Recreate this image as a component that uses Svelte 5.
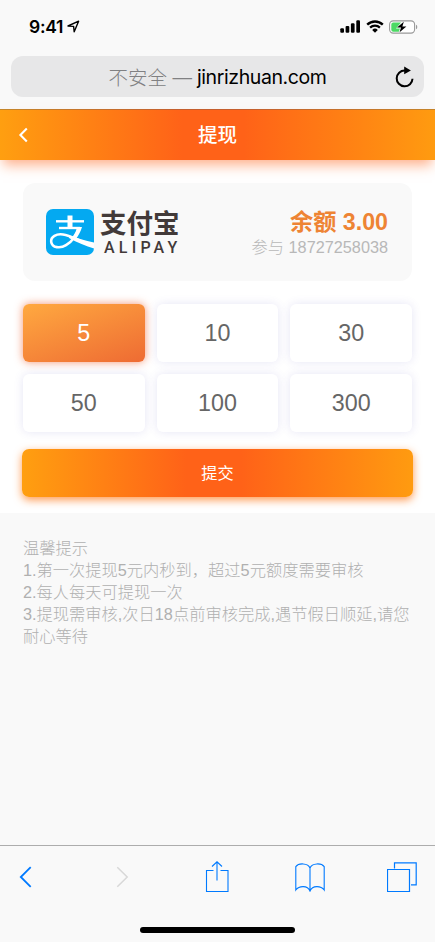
<script lang="ts">
	let amounts = [5, 10, 30, 50, 100, 300];
	let selected = $state(5);

	let tips = [
		'1.第一次提现5元内秒到，超过5元额度需要审核',
		'2.每人每天可提现一次',
		'3.提现需审核,次日18点前审核完成,遇节假日顺延,请您耐心等待',
	];
</script>

<div class="screen">
	<div class="status-bar">
		<div class="clock">
			<span>9:41</span>
			<svg width="13" height="13" viewBox="0 0 13 13">
				<path d="M1 6 L11.6 1.2 L7.2 11.8 L6.6 6.4 Z" fill="none" stroke="#000" stroke-width="1.4" stroke-linejoin="round" />
			</svg>
		</div>
		<div class="indicators">
			<svg width="21" height="13" viewBox="0 0 21 13">
				<rect x="0.3" y="8.2" width="3.7" height="4.6" rx="1.1" />
				<rect x="5.6" y="6" width="3.7" height="6.8" rx="1.1" />
				<rect x="10.9" y="3.3" width="3.7" height="9.5" rx="1.1" />
				<rect x="16.3" y="0.3" width="3.7" height="12.5" rx="1.1" />
			</svg>
			<svg width="18" height="13" viewBox="0 0 18 13">
				<path d="M1.2 4.6 A11.2 11.2 0 0 1 16.8 4.6" fill="none" stroke="#000" stroke-width="2.4" />
				<path d="M4.1 7.6 A7.1 7.1 0 0 1 13.9 7.6" fill="none" stroke="#000" stroke-width="2.2" />
				<path d="M9 12.8 L6.2 9.9 A4 4 0 0 1 11.8 9.9 Z" />
			</svg>
			<svg width="29" height="14" viewBox="0 0 29 14">
				<rect x="0.6" y="0.9" width="25" height="12.2" rx="3.6" fill="#fff" stroke="#999" stroke-width="1.1" />
				<path d="M4.3 2.4 H12 L7 8.4 H11 L9.8 11.7 H4.3 Q2.3 11.7 2.3 9.7 V4.4 Q2.3 2.4 4.3 2.4 Z" fill="#4cd964" />
				<path d="M14.8 1.8 L8 7.6 H12 L10.6 12.3 L17.4 6.4 H13.4 Z" fill="#000" />
				<path d="M27 4.8 Q28.3 5.3 28.3 7 Q28.3 8.7 27 9.2 Z" fill="#999" />
			</svg>
		</div>
	</div>

	<div class="address-bar">
		<div class="address">
			<span class="insecure">不安全 —</span>
			<span class="domain">jinrizhuan.com</span>
			<svg class="reload" width="20" height="22" viewBox="0 0 20 22">
				<path d="M11 4.5 H9.8 A7.9 7.9 0 1 0 17.5 12.7" fill="none" stroke="#000" stroke-width="2" />
				<path d="M9.2 0.6 L15.9 4.4 L9.2 8.2 Z" />
			</svg>
		</div>
	</div>

	<header>
		<button class="back" aria-label="返回">
			<svg width="10" height="16" viewBox="0 0 10 16">
				<path d="M8.8 1.6 L2.4 8 L8.8 14.4" fill="none" stroke="#fff" stroke-width="2.1" />
			</svg>
		</button>
		<h1>提现</h1>
	</header>

	<main>
		<section class="account">
			<div class="alipay">
				<svg width="48" height="46" viewBox="0 0 48 46">
					<rect width="48" height="46" rx="7" fill="#04a9f1" />
					<g fill="none" stroke="#fff">
						<path d="M24 6.5 V19.5" stroke-width="5" />
						<path d="M10 12.3 H38" stroke-width="2.4" />
						<path d="M13 19 H34" stroke-width="2.4" />
						<path d="M32.8 18.5 C31 26 26 32.5 20 36.2 C14.5 39.6 6 39 5.2 32.8 C4.6 27.6 10.5 24.6 17 25.5 C23 26.3 29 29.5 35 32" stroke-width="2.6" />
					</g>
					<path d="M31 18 H36 C34.6 22.8 32.4 26.8 29.8 30 L26 28.4 C28.6 25.4 30.4 22 31 18 Z" fill="#fff" />
					<path d="M23 26.2 C31 29.2 39 31.8 48 33.4 V39.4 C40 37.4 31 33.4 23 29 Z" fill="#fff" />
				</svg>
				<div class="wordmark">
					<span class="zh">支付宝</span>
					<span class="en">ALIPAY</span>
				</div>
			</div>
			<div class="balance">
				<strong>余额 3.00</strong>
				<span>参与 18727258038</span>
			</div>
		</section>

		<div class="amounts">
			{#each amounts as amount}
				<button class="amount" class:active={selected === amount} onclick={() => (selected = amount)}>
					{amount}
				</button>
			{/each}
		</div>

		<button class="submit">提交</button>
	</main>

	<section class="tips">
		<p>温馨提示</p>
		{#each tips as tip}
			<p>{tip}</p>
		{/each}
	</section>

	<footer>
		<nav>
			<svg width="14" height="22" viewBox="0 0 14 22">
				<path d="M11.7 1.2 L1.8 11 L11.7 20.8" stroke="#007aff" stroke-width="1.8" />
			</svg>
			<svg width="14" height="22" viewBox="0 0 14 22">
				<path d="M1.3 1.2 L11.2 11 L1.3 20.8" stroke="#d8d8d8" stroke-width="1.5" />
			</svg>
			<svg width="24" height="32" viewBox="0 0 24 32">
				<path d="M8.5 9.5 H1.5 V30.5 H23 V9.5 H15.5 M12 19.5 V1 M7 5.5 L12 0.8 L17 5.5" stroke="#007aff" stroke-width="1.1" />
			</svg>
			<svg width="30" height="30" viewBox="0 0 30 30">
				<path d="M15 6 C13 0.8 3.5 0.8 0.8 4.6 V28 C4 23.7 12.5 23 15 29 C17.5 23 26 23.7 29.2 28 V4.6 C26.5 0.8 17 0.8 15 6 V29.5" stroke="#007aff" stroke-width="1.1" />
			</svg>
			<svg width="30" height="30" viewBox="0 0 30 30">
				<path d="M0.5 7.5 H22.5 V29.5 H0.5 Z M7.5 6.5 V0.9 H29.2 V22.8 H24" stroke="#007aff" stroke-width="1.2" />
			</svg>
		</nav>
		<div class="home-indicator"></div>
	</footer>
</div>

<style>
	:global(body) {
		background: #f9f9f9;
	}

	.screen {
		display: flex;
		flex-direction: column;
		height: 942px;
		background: #f9f9f9;
		font-family: "Liberation Sans", "Noto Sans CJK SC", sans-serif;
		overflow: hidden;
	}

	button {
		padding: 0;
		border: none;
		font-family: inherit;
		cursor: pointer;
	}

	svg {
		display: block;
		flex: none;
	}

	.status-bar {
		display: flex;
		justify-content: space-between;
		align-items: center;
		box-sizing: border-box;
		height: 56px;
		padding: 0 17px 3px 29px;
	}

	.clock {
		display: flex;
		align-items: center;
		gap: 4px;
		font-family: Inter, sans-serif;
		font-size: 17.5px;
		font-weight: 600;
		letter-spacing: -0.3px;
	}

	.indicators {
		display: flex;
		align-items: center;
		gap: 5px;
	}

	.address-bar {
		box-sizing: border-box;
		height: 53px;
		padding: 0 11px;
	}

	.address {
		position: relative;
		display: flex;
		justify-content: center;
		align-items: center;
		gap: 5px;
		height: 41px;
		border-radius: 12px;
		background: #e7e7e8;
		font-family: Inter, "Noto Sans CJK SC", sans-serif;
		font-size: 19.5px;
		letter-spacing: -0.4px;
	}

	.insecure {
		color: #808082;
		font-weight: 300;
		letter-spacing: 0;
	}

	.reload {
		position: absolute;
		right: 9px;
		top: 10px;
	}

	header {
		display: grid;
		grid-template-columns: 60px 1fr 60px;
		align-items: center;
		flex: none;
		box-sizing: border-box;
		height: 51px;
		border-top: 1px solid rgba(90, 90, 90, 0.35);
		background: linear-gradient(90deg, #ff9f10, #ff6218 42%, #ff6218 56%, #ff9b10);
		box-shadow: 0 8px 12px -3px rgba(255, 98, 24, 0.5);
		position: relative;
	}

	.back {
		justify-self: start;
		margin-left: 18px;
		background: none;
	}

	h1 {
		margin: 0 0 4px;
		color: #fff;
		font-size: 19.5px;
		font-weight: 500;
		text-align: center;
	}

	main {
		box-sizing: border-box;
		height: 353px;
		padding: 23px 23px 0;
		background: #fff;
	}

	.account {
		display: flex;
		justify-content: space-between;
		align-items: center;
		box-sizing: border-box;
		height: 98px;
		padding: 0 24px 0 23px;
		border-radius: 12px;
		background: #f9f9f9;
	}

	.alipay {
		display: flex;
		gap: 6px;
	}

	.wordmark {
		display: flex;
		flex-direction: column;
		color: #423a39;
		white-space: nowrap;
	}

	.zh {
		font-size: 26.5px;
		font-weight: 700;
		line-height: 31px;
	}

	.en {
		padding-left: 4px;
		font-family: Roboto, sans-serif;
		font-size: 16px;
		font-weight: 500;
		line-height: 16px;
		letter-spacing: 4.2px;
	}

	.balance {
		display: flex;
		flex-direction: column;
		align-items: flex-end;
		padding-top: 1px;
	}

	.balance strong {
		color: #ee8434;
		font-size: 23.2px;
		font-weight: 600;
		line-height: 29px;
	}

	.balance span {
		color: #b8b8b8;
		font-size: 16.25px;
		font-weight: 300;
		line-height: 21px;
	}

	.amounts {
		display: grid;
		grid-template-columns: repeat(3, 1fr);
		gap: 12px;
		margin-top: 23px;
	}

	.amount {
		height: 58px;
		border-radius: 6px;
		background: #fff;
		box-shadow: 0 0 10px rgba(90, 80, 190, 0.15);
		color: #666;
		font-size: 23.3px;
	}

	.amount.active {
		background: linear-gradient(160deg, #ffa940, #ee6b33);
		box-shadow: 0 0 8px rgba(238, 90, 40, 0.65);
		color: #fff;
	}

	.submit {
		display: block;
		width: 391px;
		height: 48px;
		margin: 17px -1px 0;
		padding-bottom: 2px;
		border-radius: 7px;
		background: linear-gradient(90deg, #ff9f10, #ff6218 42%, #ff6218 56%, #ff9b10);
		box-shadow: 0 3px 9px rgba(255, 120, 24, 0.75);
		color: #fff;
		font-size: 16.2px;
	}

	.tips {
		flex: 1;
		padding: 24px 20px 0 23px;
		color: #b0b0b0;
		font-size: 16.25px;
		font-weight: 300;
		line-height: 22px;
	}

	.tips p {
		margin: 0;
	}

	footer {
		box-sizing: border-box;
		height: 97px;
		border-top: 1px solid #adadad;
	}

	nav {
		display: grid;
		grid-template-columns: 97px 89px 90px 92px 30px;
		align-items: center;
		height: 62px;
		padding-left: 19px;
	}

	nav path {
		fill: none;
	}

	.home-indicator {
		width: 155px;
		height: 6px;
		margin: 19px auto 0;
		border-radius: 3px;
		background: #000;
	}
</style>
